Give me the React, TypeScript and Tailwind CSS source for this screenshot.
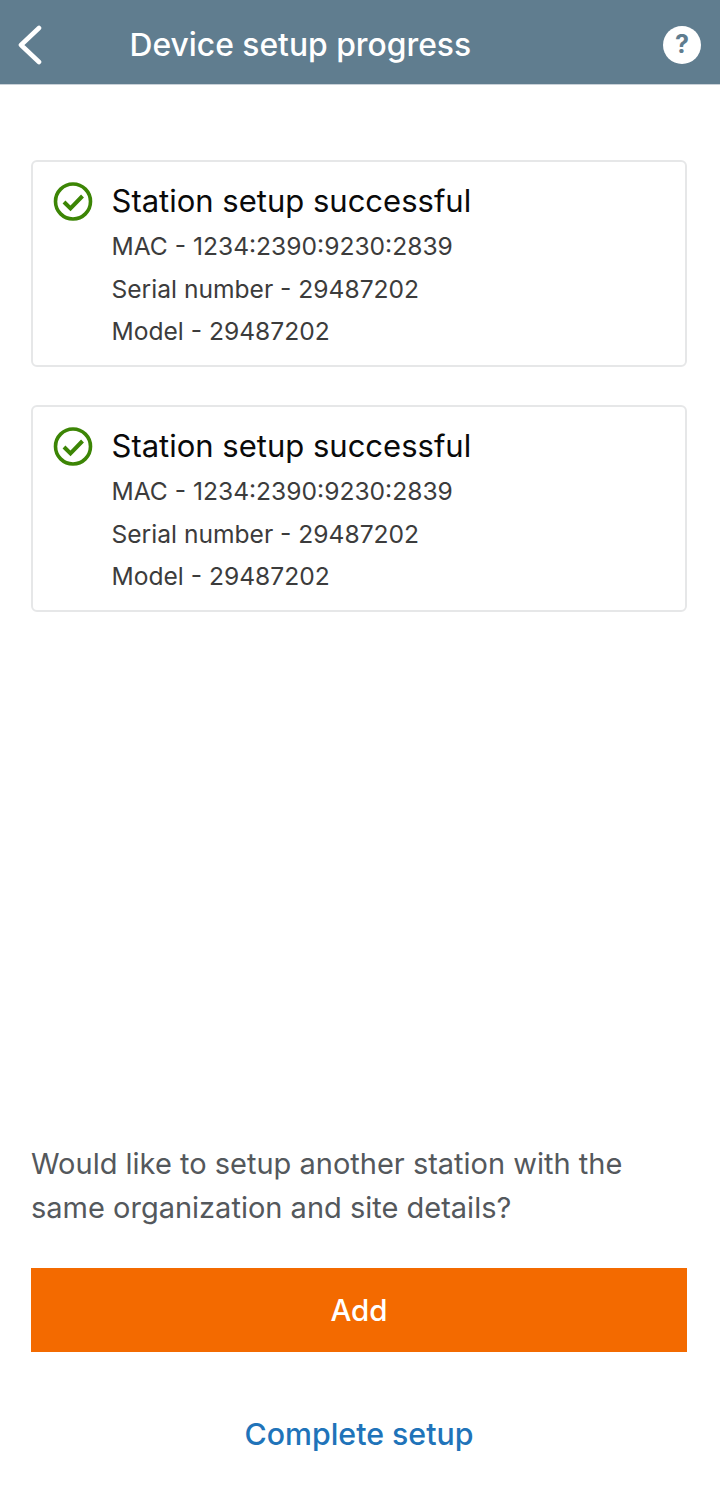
import React from "react";

function StationCard() {
  return (
    <div className="flex h-[207px] rounded-[6px] border-2 border-[#e6e7e8] pl-[20px] pt-[19px]">
      <svg width="40" height="40" viewBox="0 0 40 40" fill="none" className="shrink-0">
        <circle cx="20" cy="20.5" r="17.5" stroke="#3c8505" strokeWidth="3.6" />
        <path d="M11 21 L17.5 27.5 L29.5 15" stroke="#3c8505" strokeWidth="4" />
      </svg>
      <div className="ml-[18.5px]">
        <div className="text-[31px] leading-[39px] text-[#0a0a0a]">Station setup successful</div>
        <div className="mt-[5px] text-[24.6px] leading-[42.5px] text-[#3c3c3c]">
          <p>MAC - 1234:2390:9230:2839</p>
          <p>Serial number - 29487202</p>
          <p>Model - 29487202</p>
        </div>
      </div>
    </div>
  );
}

export default function App() {
  return (
    <div className="flex h-[1512px] flex-col bg-white font-['Inter',sans-serif]">
      <div className="flex h-[85px] items-center justify-between border-b border-[#c9d1d8] bg-[#607d8f] pl-[17px] pr-[19px] pt-[5px] text-white">
        <div className="flex items-center">
          <svg width="28" height="40" viewBox="0 0 28 40" fill="none">
            <path d="M22 3 L4 20 L22 37" stroke="white" strokeWidth="4.6" strokeLinecap="round" strokeLinejoin="round" />
          </svg>
          <h1 className="ml-[84.5px] text-[31.8px] font-medium">Device setup progress</h1>
        </div>
        <div className="flex h-[38px] w-[38px] items-center justify-center rounded-full bg-white text-[25px] font-bold text-[#607d8f]">
          ?
        </div>
      </div>

      <div className="flex flex-1 flex-col pl-[31px] pr-[33px] pt-[75px]">
        <div className="flex flex-col gap-[38px]">
          <StationCard />
          <StationCard />
        </div>

        <p className="mt-auto whitespace-nowrap text-[29px] leading-[44px] text-[#54585c]">
          Would like to setup another station with the
          <br />
          same organization and site details?
        </p>
        <button className="mt-[38px] h-[84px] w-full bg-[#f36a00] pt-[1px] text-[29.5px] font-medium text-white">
          Add
        </button>
        <button className="mb-[36px] mt-[40px] h-[84px] w-full pt-[2px] text-[30.3px] font-medium text-[#2073b9]">
          Complete setup
        </button>
      </div>
    </div>
  );
}
